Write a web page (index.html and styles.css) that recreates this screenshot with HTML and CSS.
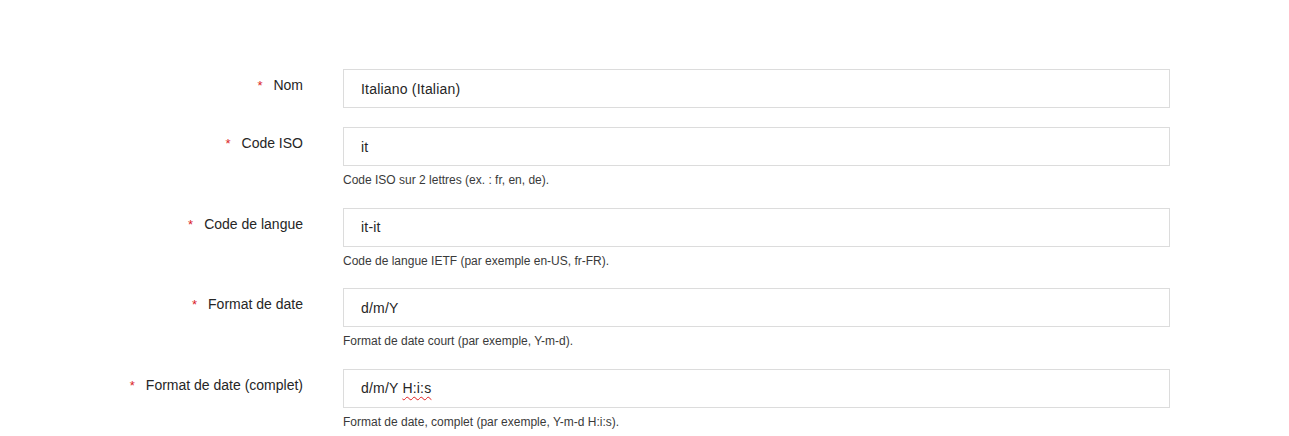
FILE: index.html
```html
<!DOCTYPE html>
<html lang="fr">
<head>
<meta charset="utf-8">
<title>Langue</title>
<link rel="stylesheet" href="styles.css">
</head>
<body>
<form class="form">
  <div class="row">
    <label class="label"><span class="req">*</span>Nom</label>
    <div class="control">
      <div class="input">Italiano (Italian)</div>
    </div>
  </div>
  <div class="row">
    <label class="label"><span class="req">*</span>Code ISO</label>
    <div class="control">
      <div class="input">it</div>
      <p class="help">Code ISO sur 2 lettres (ex. : fr, en, de).</p>
    </div>
  </div>
  <div class="row">
    <label class="label"><span class="req">*</span>Code de langue</label>
    <div class="control">
      <div class="input">it-it</div>
      <p class="help">Code de langue IETF (par exemple en-US, fr-FR).</p>
    </div>
  </div>
  <div class="row">
    <label class="label"><span class="req">*</span>Format de date</label>
    <div class="control">
      <div class="input">d/m/Y</div>
      <p class="help">Format de date court (par exemple, Y-m-d).</p>
    </div>
  </div>
  <div class="row">
    <label class="label"><span class="req">*</span>Format de date (complet)</label>
    <div class="control">
      <div class="input">d/m/Y <span class="spell">H:i:s</span></div>
      <p class="help">Format de date, complet (par exemple, Y-m-d H:i:s).</p>
    </div>
  </div>
</form>
</body>
</html>
```

FILE: styles.css
```css
html, body {
  margin: 0;
  padding: 0;
  background: #ffffff;
}
body {
  font-family: "Liberation Sans", Arial, sans-serif;
  color: #262626;
}
.form {
  padding-top: 69px;
  display: flex;
  flex-direction: column;
  gap: 19px;
}
.row {
  display: grid;
  grid-template-columns: 303px 827px;
  column-gap: 40px;
  align-items: start;
}
.label {
  text-align: right;
  font-size: 14px;
  line-height: 18px;
  padding-top: 7px;
  color: #262626;
}
.req {
  color: #da1e28;
  font-size: 13px;
  margin-right: 11px;
}
.control {
  display: flex;
  flex-direction: column;
}
.input {
  box-sizing: border-box;
  height: 39px;
  border: 1px solid #dcdcdc;
  padding: 0 17px;
  display: flex;
  align-items: center;
  font-size: 14px;
  letter-spacing: 0.2px;
  color: #262626;
  white-space: pre;
}
.spell {
  text-decoration: underline wavy #e02020;
  text-decoration-thickness: 1px;
  text-underline-offset: 3px;
}
.help {
  margin: 6px 0 0 0;
  font-size: 12px;
  line-height: 16.5px;
  color: #3a3a3a;
}
```
